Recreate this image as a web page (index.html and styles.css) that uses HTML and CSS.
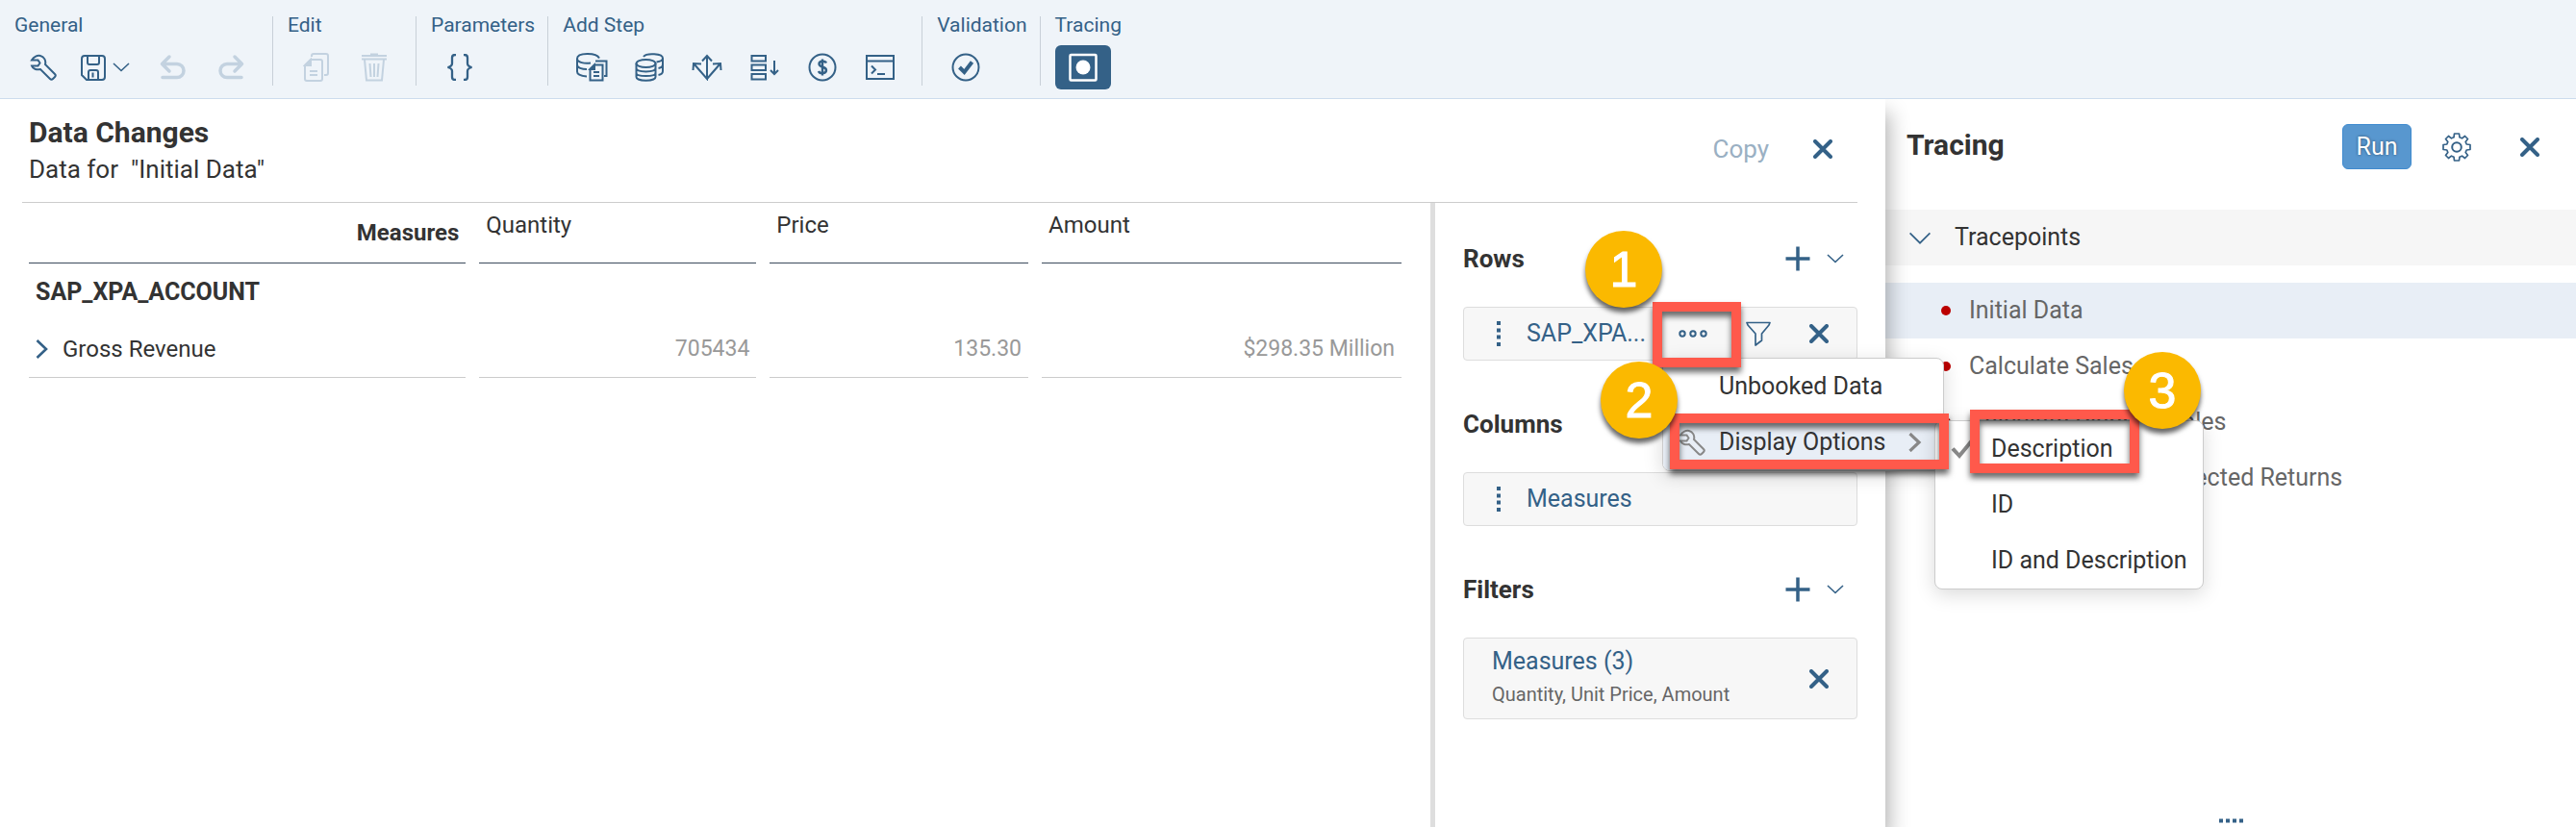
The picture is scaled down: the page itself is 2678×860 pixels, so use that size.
FILE: index.html
```html
<!DOCTYPE html>
<html lang="en">
<head>
<meta charset="utf-8">
<title>Data Changes</title>
<link rel="stylesheet" href="styles.css">
</head>
<body>
<svg class="sprite" aria-hidden="true">
  <symbol id="close" viewBox="0 0 20 20"><path d="M2 2 18 18M18 2 2 18" stroke-width="4" stroke-linecap="round"/></symbol>
  <symbol id="chevron" viewBox="0 0 18 10"><path d="M1 1 9 8.500 17 1" stroke-width="1.600"/></symbol>
  <symbol id="plus" viewBox="0 0 26 26"><path d="M13 .5V25.500M.5 13H25.500" stroke-width="3.500"/></symbol>
  <symbol id="grip" viewBox="0 0 4 26"><path d="M2 0V4M2 7.500V11.500M2 14.500V18.500M2 22V26" stroke-width="4"/></symbol>
  <symbol id="wrench" viewBox="0 0 28 28"><path d="M2 6.500C4 3 8 1 11 2C15 3 17 7 16 11L26 21C27 22 27 23 26 24L24 26C23 27 22 27 21 26L11 16C7 17 3 15.500 2 12.500H8.500L10.500 9.500L8.500 6.500Z"/></symbol>
</svg>

<header class="toolbar">
  <section class="group">
    <h2 class="group-title">General</h2>
    <div class="group-tools">
      <button class="tool" aria-label="Settings"><svg width="28" height="28"><use href="#wrench"/></svg></button>
      <button class="tool tool-split" aria-label="Save">
        <svg width="26" height="27" viewBox="0 0 26 27"><path d="M4 1H22Q25 1 25 4V23Q25 26 22 26H6L1 21V4Q1 1 4 1ZM7 1V8Q7 10 9 10H17Q19 10 19 8V1M8 26V18Q8 16 10 16H16Q18 16 18 18V26M12.500 18.500V23.500"/></svg>
        <svg width="18" height="10"><use href="#chevron"/></svg>
      </button>
      <button class="tool" aria-label="Undo" disabled><svg width="28" height="28" viewBox="0 0 28 28"><path d="M10 3 2.500 10.500 10 18M3 10.500H18A7 7 0 0 1 18 24.500H3" stroke-width="3.500" stroke-linecap="round" stroke-linejoin="round"/></svg></button>
      <button class="tool" aria-label="Redo" disabled><svg width="28" height="28" viewBox="0 0 28 28"><path d="M18 3 25.500 10.500 18 18M25 10.500H10A7 7 0 0 0 10 24.500H25" stroke-width="3.500" stroke-linecap="round" stroke-linejoin="round"/></svg></button>
    </div>
  </section>
  <section class="group">
    <h2 class="group-title">Edit</h2>
    <div class="group-tools">
      <button class="tool" aria-label="Copy step" disabled><svg width="28" height="30" viewBox="0 0 28 30"><path d="M9 4V3Q9 1 11 1H24Q26 1 26 3V21Q26 23 24 23H22M8 7H18Q20 7 20 9V27Q20 29 18 29H4Q2 29 2 27V13ZM7 19H15M7 23H15"/><path d="M8 7V13H2Z" fill="currentColor"/></svg></button>
      <button class="tool" aria-label="Delete step" disabled><svg width="26" height="30" viewBox="0 0 26 30"><path d="M0 3H26M0 6.500H26M9 1.500H17M3 7 5 28.500H21L23 7M8.500 11 9.500 25M13 11V25M17.500 11 16.500 25"/></svg></button>
    </div>
  </section>
  <section class="group">
    <h2 class="group-title">Parameters</h2>
    <div class="group-tools">
      <button class="tool" aria-label="Parameters"><svg width="28" height="28" viewBox="0 0 28 28"><path d="M10 1H9Q6 1 6 4V10Q6 13 1.500 14Q6 15 6 18V24Q6 27 9 27H10M18 1H19Q22 1 22 4V10Q22 13 26.500 14Q22 15 22 18V24Q22 27 19 27H18" stroke-width="2.300"/></svg></button>
    </div>
  </section>
  <section class="group">
    <h2 class="group-title">Add Step</h2>
    <div class="group-tools">
      <button class="tool" aria-label="Copy data"><svg width="34" height="30" viewBox="0 0 34 30"><path d="M25 5.500C22 -.5 2 -.5 2 6V19.500C2 22.500 6 24 12 24.500M2 6C2 10 10 11.500 16 10.500M2 12.500C2 15.500 7 17 12 17M21 8.500H32.500V24H30M20 12.500H28.500V28.500H15.500V17ZM19 20H25M19 24H25"/><path d="M20 12.500V17H15.500Z" fill="currentColor"/></svg></button>
      <button class="tool" aria-label="Data action"><svg width="30" height="30" viewBox="0 0 30 30"><ellipse cx="11.500" cy="11" rx="10" ry="4"/><path d="M1.500 11V25C1.500 30 21.500 30 21.500 25V11M1.500 16C1.500 20.500 21.500 20.500 21.500 16M1.500 21C1.500 25 21.500 25 21.500 21M9 4C12 -.3 29 .5 29 5.500V19C29 21 27 22.500 24.500 23M29 5.500C29 7.500 27 9 22.500 9.500M29 12C29 14 27 15.500 24.500 16"/></svg></button>
      <button class="tool" aria-label="Allocation"><svg width="32" height="28" viewBox="0 0 32 28"><path d="M16 2V26L2.500 10.500M16 26 29.500 10.500M11 7.500 16 2 21 7.500M1.500 17 2 10 10 10.500M30.500 17 30 10 22 10.500"/></svg></button>
      <button class="tool" aria-label="Sequence"><svg width="30" height="28" viewBox="0 0 30 28"><path d="M1.500 2H16V7.500H1.500ZM1.500 11.500H16V17H1.500ZM1.500 21H16V26.500H1.500ZM25 7V20.500M21 17 25 21 29 17"/></svg></button>
      <button class="tool" aria-label="Currency conversion"><svg width="30" height="30" viewBox="0 0 30 30"><circle cx="15" cy="15" r="13.500"/><path d="M19 10.500C18 8 11.500 8 11.500 11.500C11.500 15.500 19 14 19 18C19 22 12 22 11 19M15 6.500V23.500" stroke-width="2.400"/></svg></button>
      <button class="tool" aria-label="Script"><svg width="30" height="28" viewBox="0 0 30 28"><path d="M1 2H29V26H1ZM1 7.500H29M6 12.500 10 16.500 6 20.500M12 21H20"/></svg></button>
    </div>
  </section>
  <section class="group">
    <h2 class="group-title">Validation</h2>
    <div class="group-tools">
      <button class="tool" aria-label="Validate"><svg width="30" height="30" viewBox="0 0 30 30"><circle cx="15" cy="15" r="13.500"/><path d="M8.500 15 13.500 20 21.500 9.500" stroke-width="4"/></svg></button>
    </div>
  </section>
  <section class="group">
    <h2 class="group-title">Tracing</h2>
    <div class="group-tools">
      <button class="tool tool-active" aria-label="Tracing" aria-pressed="true"><svg width="30" height="30" viewBox="0 0 30 30"><rect x="1.500" y="2" width="27" height="26.500" rx="1" stroke-width="2.500"/><circle cx="15" cy="15" r="7.500" fill="currentColor" stroke="none"/></svg></button>
    </div>
  </section>
</header>

<main class="workspace">
  <section class="changes">
    <header class="changes-head">
      <div class="changes-titles">
        <h1 class="title">Data Changes</h1>
        <p class="subtitle">Data for &nbsp;"Initial Data"</p>
      </div>
      <button class="copy" disabled>Copy</button>
      <button class="icon-btn" aria-label="Close data changes"><svg width="20" height="20"><use href="#close"/></svg></button>
    </header>
    <div class="changes-body">
      <div class="table-pane">
        <table class="data">
          <colgroup><col class="col-dim"><col class="col-qty"><col class="col-price"><col class="col-amount"></colgroup>
          <thead>
            <tr><th class="measures" scope="col">Measures</th><th scope="col">Quantity</th><th scope="col">Price</th><th scope="col">Amount</th></tr>
          </thead>
          <tbody>
            <tr class="account"><th scope="row">SAP_XPA_ACCOUNT</th><td></td><td></td><td></td></tr>
            <tr class="member">
              <th scope="row"><button class="expand" aria-label="Expand"><svg width="14" height="20" viewBox="0 0 14 20"><path d="M1.500 1 11 10 1.500 19" stroke-width="2.600"/></svg></button>Gross Revenue</th>
              <td>705434</td><td>135.30</td><td>$298.35 Million</td>
            </tr>
          </tbody>
        </table>
      </div>
      <aside class="builder">
        <section class="axis">
          <header class="axis-head">
            <h2 class="axis-title">Rows</h2>
            <button class="icon-btn" aria-label="Add row"><svg width="26" height="26"><use href="#plus"/></svg></button>
            <button class="icon-btn" aria-label="Row options"><svg width="18" height="10"><use href="#chevron"/></svg></button>
          </header>
          <div class="card card-open">
            <svg class="grip" width="4" height="26"><use href="#grip"/></svg>
            <a class="card-name" href="#">SAP_XPA...</a>
            <div class="card-tools">
              <button class="icon-btn" aria-label="More"><svg width="30" height="10" viewBox="0 0 30 10"><circle cx="4" cy="5" r="2.700"/><circle cx="15" cy="5" r="2.700"/><circle cx="26" cy="5" r="2.700"/></svg></button>
              <button class="icon-btn" aria-label="Filter"><svg width="26" height="26" viewBox="0 0 26 26"><path d="M1 1.500H25L24 4 16.500 13V20L10 25V13L2 4Z" stroke-width="1.700" stroke-linejoin="round"/></svg></button>
              <button class="icon-btn" aria-label="Remove"><svg width="20" height="20"><use href="#close"/></svg></button>
            </div>

            <span class="frame frame-more"></span>
            <div class="menu menu-main" role="menu">
              <button class="menu-item" role="menuitem">Unbooked Data</button>
              <button class="menu-item menu-selected" role="menuitem">
                <svg class="menu-icon" width="28" height="28"><use href="#wrench"/></svg>
                Display Options
                <svg class="menu-arrow" width="14" height="20" viewBox="0 0 14 20"><path d="M1.500 1 11 10 1.500 19" stroke-width="3.200"/></svg>
              </button>
            </div>
            <div class="menu menu-sub" role="menu">
              <button class="menu-item" role="menuitemradio" aria-checked="true">
                <svg class="menu-icon" width="28" height="22" viewBox="0 0 28 22"><path d="M2 10.500 9 18 23 1" stroke-width="4"/></svg>
                Description
              </button>
              <button class="menu-item" role="menuitemradio" aria-checked="false">ID</button>
              <button class="menu-item" role="menuitemradio" aria-checked="false">ID and Description</button>
            </div>
            <span class="frame frame-display"></span>
            <span class="frame frame-description"></span>
            <span class="badge badge-one">1</span>
            <span class="badge badge-two">2</span>
            <span class="badge badge-three">3</span>
          </div>
        </section>
        <section class="axis">
          <header class="axis-head"><h2 class="axis-title">Columns</h2></header>
          <div class="card">
            <svg class="grip" width="4" height="26"><use href="#grip"/></svg>
            <a class="card-name" href="#">Measures</a>
          </div>
        </section>
        <section class="axis">
          <header class="axis-head">
            <h2 class="axis-title">Filters</h2>
            <button class="icon-btn" aria-label="Add filter"><svg width="26" height="26"><use href="#plus"/></svg></button>
            <button class="icon-btn" aria-label="Filter options"><svg width="18" height="10"><use href="#chevron"/></svg></button>
          </header>
          <div class="card card-filter">
            <div class="card-text">
              <a class="card-name" href="#">Measures (3)</a>
              <p class="card-note">Quantity, Unit Price, Amount</p>
            </div>
            <div class="card-tools">
              <button class="icon-btn" aria-label="Remove filter"><svg width="20" height="20"><use href="#close"/></svg></button>
            </div>
          </div>
        </section>
      </aside>
    </div>
  </section>

  <aside class="tracing">
    <header class="tracing-head">
      <h2 class="tracing-title">Tracing</h2>
      <button class="run">Run</button>
      <button class="icon-btn" aria-label="Tracing settings"><svg width="30" height="30" viewBox="0 0 30 30"><path d="M12.500 1H17.500L18 4.800L20.500 5.800L23.500 3.500L26.500 6.500L24.200 9.500L25.200 12L29 12.500V17.500L25.200 18L24.200 20.500L26.500 23.500L23.500 26.500L20.500 24.200L18 25.200L17.500 29H12.500L12 25.200L9.500 24.200L6.500 26.500L3.500 23.500L5.800 20.500L4.800 18L1 17.500V12.500L4.800 12L5.800 9.500L3.500 6.500L6.500 3.500L9.500 5.800L12 4.800Z" stroke-width="1.700" stroke-linejoin="round"/><circle cx="15" cy="15" r="4.800"/></svg></button>
      <button class="icon-btn" aria-label="Close tracing"><svg width="20" height="20"><use href="#close"/></svg></button>
    </header>
    <button class="tracepoints" aria-expanded="true"><svg width="24" height="13" viewBox="0 0 18 10"><path d="M1 1 9 9 17 1" stroke-width="1.300"/></svg>Tracepoints</button>
    <ul class="points">
      <li class="point point-selected">Initial Data</li>
      <li class="point">Calculate Sales</li>
      <li class="point">Calculate Planned Sales</li>
      <li class="point">Calculate Annual Expected Returns</li>
    </ul>
    <svg class="handle" width="27" height="5" viewBox="0 0 27 5"><path d="M1 2.500H5M8 2.500H12M15 2.500H19M22 2.500H26" stroke-width="4"/></svg>
  </aside>
</main>
</body>
</html>
```
FILE: styles.css
```css
* { box-sizing: border-box; }

body {
  margin: 0;
  min-height: 100vh;
  display: flex;
  flex-direction: column;
  font: 24px/32px Roboto, "Liberation Sans", sans-serif;
  color: #333;
  background: #fff;
}

h1, h2, p, ul { margin: 0; padding: 0; }
ul { list-style: none; }
button { font: inherit; color: #346187; background: none; border: 0; padding: 0; }
a { color: #346187; text-decoration: none; }
svg { display: block; flex: none; fill: none; stroke: currentColor; stroke-width: 2; }
.sprite { position: absolute; width: 0; height: 0; }

/* Toolbar */
.toolbar {
  display: flex;
  align-items: flex-start;
  padding-top: 17px;
  height: 103px;
  background: #eff4f9;
  border-bottom: 1px solid #cddcee;
  color: #346187;
}
.group { height: 72px; padding: 0 13px 0 15px; border-right: 1px solid #c8d0d8; }
.group:last-child { border: 0; }
.group-title { font-size: 21px; line-height: 18px; font-weight: 400; }
.group-tools { display: flex; align-items: center; margin-top: 12px; height: 46px; }
.tool { display: flex; align-items: center; justify-content: center; width: 60px; height: 46px; }
.tool:disabled { color: #c3d2e0; }
.tool-split { width: 75px; gap: 7px; padding-right: 7px; }
.tool-active { width: 58px; border-radius: 6px; background: #346187; color: #fff; }

/* Workspace */
.workspace { flex: 1; display: grid; grid-template-columns: minmax(0, 1fr) 718px; }
.changes {
  position: relative;
  z-index: 1;
  display: flex;
  flex-direction: column;
  background: #fff;
  box-shadow: 4px 14px 20px rgba(0, 0, 0, .3);
  clip-path: inset(0 -400px 0 0);
}
.changes-head {
  display: flex;
  align-items: center;
  height: 108px;
  margin: 0 29px 0 23px;
  padding: 0 26px 3px 7px;
  border-bottom: 1px solid #ccc;
}
.changes-titles { flex: 1; padding-top: 6px; }
.title { font-size: 30px; line-height: 36px; font-weight: 700; }
.subtitle { font-size: 26px; line-height: 40px; }
.copy { color: #9ab0c3; font-size: 26px; }
.icon-btn { display: flex; align-items: center; justify-content: center; }
.changes-head .icon-btn { margin-left: 46px; }
.changes-body { flex: 1; display: grid; grid-template-columns: minmax(0, 1fr) 468px; }

/* Data table */
.table-pane { padding: 0 16px; border-right: 5px solid #dedede; }
.data { width: 100%; table-layout: fixed; border-collapse: separate; border-spacing: 14px 0; }
.col-dim { width: 32.8%; }
.col-qty { width: 20.8%; }
.col-price { width: 19.4%; }
.col-amount { width: 27%; }
.data th { font-weight: 400; text-align: left; padding: 0 7px; }
.data td { text-align: right; color: #999; padding: 0 7px; font-size: 23px; }
.data thead th { height: 63px; padding-bottom: 16px; border-bottom: 1px solid #3c4b5c; }
.data thead .measures { text-align: right; font-weight: 700; padding-bottom: 0; }
.account th, .account td { height: 59px; }
.data .account th { font-weight: 700; font-size: 25px; }
.member th, .member td { height: 60px; border-bottom: 1px solid #ccc; }
.expand { display: inline-block; margin-right: 14px; vertical-align: -2px; }

/* Builder */
.builder { display: flex; flex-direction: column; gap: 38px; padding: 30px 29px 0; }
.axis { display: flex; flex-direction: column; gap: 20px; }
.axis-head { display: flex; align-items: center; gap: 17px; height: 58px; padding: 0 14px 2px 0; }
.axis-title { flex: 1; font-size: 26px; font-weight: 700; }
.card {
  position: relative;
  display: flex;
  align-items: center;
  min-height: 56px;
  padding: 0 29px 0 34px;
  border: 1px solid #ddd;
  border-radius: 4px;
  background: #f7f7f7;
}
.card-open { z-index: 2; }
.card-name { font-size: 25px; }
.grip { color: #346187; margin-right: 27px; }
.card-tools { display: flex; align-items: center; gap: 40px; margin-left: auto; }
.card-filter { min-height: 85px; padding-left: 29px; }
.card-note { font-size: 20px; line-height: 36px; color: #666; }

/* Menus */
.menu {
  position: absolute;
  border: 1px solid #ccc;
  border-radius: 8px;
  background: #fff;
  box-shadow: 0 5px 20px rgba(0, 0, 0, .15);
}
.menu-main { left: 206px; top: 52px; width: 293px; }
.menu-sub { left: 489px; top: 117px; width: 280px; }
.menu-item {
  position: relative;
  display: flex;
  align-items: center;
  width: 100%;
  height: 58px;
  padding-left: 58px;
  color: #333;
  font-size: 25px;
  white-space: nowrap;
}
.menu-icon { position: absolute; left: 16px; color: #888; }
.menu-arrow { margin-left: auto; margin-right: 22px; color: #888; }
.menu-selected { background: #e8eef6; border-radius: 0 0 7px 7px; }

/* Callouts */
.frame {
  position: absolute;
  border: 10px solid #ff594b;
  filter: drop-shadow(0 5px 3px rgba(0, 0, 0, .6));
  pointer-events: none;
}
.frame-more { left: 196px; top: -6px; width: 92px; height: 68px; z-index: 1; }
.frame-display { left: 214px; top: 110px; width: 290px; height: 58px; }
.frame-description { left: 526px; top: 106px; width: 176px; height: 66px; }
.badge {
  position: absolute;
  z-index: 2;
  width: 80px;
  border-radius: 50%;
  background: #fbb900;
  color: #fff;
  font: 52px/80px "Liberation Sans", sans-serif;
  -webkit-text-stroke: 1px #fff;
  text-align: center;
  box-shadow: 0 5px 5px rgba(0, 0, 0, .6);
}
.badge-one { left: 126px; top: -80px; }
.badge-two { left: 142px; top: 56px; }
.badge-three { left: 686px; top: 46px; }

/* Tracing */
.tracing { display: flex; flex-direction: column; }
.tracing-head { display: flex; align-items: center; height: 115px; padding: 0 38px 16px 22px; }
.tracing-title { flex: 1; padding-bottom: 4px; font-size: 30px; font-weight: 700; }
.run {
  width: 72px;
  height: 47px;
  margin-right: 32px;
  border: 1px solid #3f8bcf;
  border-radius: 6px;
  background: #5897cf;
  color: #fff;
  font-size: 25px;
  text-shadow: 0 0 3px rgba(0, 0, 0, .5);
}
.tracing-head .icon-btn + .icon-btn { margin-left: 51px; }
.tracepoints {
  display: flex;
  align-items: center;
  gap: 24px;
  height: 58px;
  padding-left: 24px;
  background: #f6f6f6;
  color: #333;
  font-size: 25px;
}
.tracepoints svg { color: #346187; }
.points { padding-top: 18px; }
.point {
  display: flex;
  align-items: center;
  gap: 19px;
  height: 58px;
  padding-left: 58px;
  color: #666;
  font-size: 25px;
  white-space: nowrap;
}
.point::before { content: ""; width: 10px; height: 10px; border-radius: 50%; background: #b00; }
.point-selected { background: #e8eef6; }
.handle { margin: auto auto 4px; color: #346187; }
```
